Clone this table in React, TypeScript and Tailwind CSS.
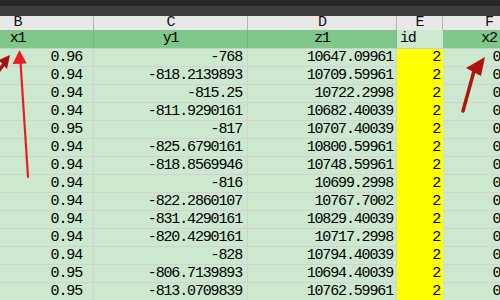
import React from 'react';

type Row = { b: string; c: string; d: string; f: string };

const rows: Row[] = [
  { b: '0.96', c: '-768', d: '10647.09961', f: '0.96' },
  { b: '0.94', c: '-818.2139893', d: '10709.59961', f: '0.94' },
  { b: '0.94', c: '-815.25', d: '10722.2998', f: '0.94' },
  { b: '0.94', c: '-811.9290161', d: '10682.40039', f: '0.94' },
  { b: '0.95', c: '-817', d: '10707.40039', f: '0.95' },
  { b: '0.94', c: '-825.6790161', d: '10800.59961', f: '0.94' },
  { b: '0.94', c: '-818.8569946', d: '10748.59961', f: '0.94' },
  { b: '0.94', c: '-816', d: '10699.2998', f: '0.94' },
  { b: '0.94', c: '-822.2860107', d: '10767.7002', f: '0.94' },
  { b: '0.94', c: '-831.4290161', d: '10829.40039', f: '0.94' },
  { b: '0.94', c: '-820.4290161', d: '10717.2998', f: '0.94' },
  { b: '0.94', c: '-828', d: '10794.40039', f: '0.94' },
  { b: '0.95', c: '-806.7139893', d: '10694.40039', f: '0.95' },
  { b: '0.95', c: '-813.0709839', d: '10762.59961', f: '0.95' },
];

// column widths (B starts off-screen at -58px)
const colB = 'w-[152px] shrink-0';
const colC = 'w-[154px] shrink-0';
const colD = 'w-[149px] shrink-0';
const colE = 'w-[46px] shrink-0';
const colF = 'w-[92px] shrink-0';

const Arrows: React.FC = () => (
  <svg className="absolute inset-0 pointer-events-none" width="500" height="300" viewBox="0 0 500 300">
    {/* bright red arrow pointing at x1 */}
    <line x1="28" y1="177" x2="20.5" y2="62" stroke="#ec1c24" strokeWidth="2.2" strokeLinecap="round" />
    <polygon points="19.5,50 12.7,64 26.7,63.5" fill="#ec1c24" />
    {/* dark red arrow at left edge */}
    <line x1="-10" y1="82" x2="4" y2="64" stroke="#a8120e" strokeWidth="3.5" />
    <polygon points="10,55 -1,60 7,69" fill="#a8120e" />
    {/* dark red arrow pointing at x2 */}
    <line x1="463" y1="111" x2="474" y2="71" stroke="#b0140f" strokeWidth="3.5" strokeLinecap="round" />
    <polygon points="485,57 466,68 481,76" fill="#b0140f" />
  </svg>
);

export default function App() {
  return (
    <div className="relative h-[300px] w-[500px] overflow-hidden bg-[#cce8cf] font-['Liberation_Mono',monospace] text-[15px] tracking-[-1.15px] text-black">
      <div className="h-[6px] bg-[#272727]" />
      <div className="h-[10px] bg-[#3c3c3c]" />

      {/* column letters */}
      <div className="ml-[-58px] flex h-[14px] bg-[#e8e8e8] leading-[13px] text-[#111]">
        <div className={`${colB} border-r border-[#b4b4b4] text-center`}>B</div>
        <div className={`${colC} border-r border-[#b4b4b4] text-center`}>C</div>
        <div className={`${colD} border-r border-[#b4b4b4] text-center`}>D</div>
        <div className={`${colE} border-r border-[#b4b4b4] text-center`}>E</div>
        <div className={`${colF} text-center`}>F</div>
      </div>

      {/* field names */}
      <div className="ml-[-58px] flex h-[19px] border-b border-[#b9d8bc] leading-[18px]">
        <div className={`${colB} border-r border-[#74b97e] bg-[#80c78b] text-center`}>x1</div>
        <div className={`${colC} border-r border-[#74b97e] bg-[#80c78b] text-center`}>y1</div>
        <div className={`${colD} border-r border-[#74b97e] bg-[#80c78b] text-center`}>z1</div>
        <div className={`${colE} bg-[#cce8cf] pl-[3px]`}>id</div>
        <div className={`${colF} bg-[#80c78b] text-center`}>x2</div>
      </div>

      {rows.map((r, i) => (
        <div key={i} className="ml-[-58px] flex h-[18px] leading-[17px]">
          <div className={`${colB} border-b border-r border-[#d6d0d4] pr-[11px] text-right`}>{r.b}</div>
          <div className={`${colC} border-b border-r border-[#d6d0d4] pr-[5px] text-right`}>{r.c}</div>
          <div className={`${colD} border-b border-r border-[#d6d0d4] pr-[3px] text-right`}>{r.d}</div>
          <div className={`${colE} bg-[#ffff00] pr-[3px] text-right leading-[18px]`}>2</div>
          <div className={`${colF} border-b border-[#d6d0d4] pr-[11px] text-right`}>{r.f}</div>
        </div>
      ))}

      <Arrows />
    </div>
  );
}
